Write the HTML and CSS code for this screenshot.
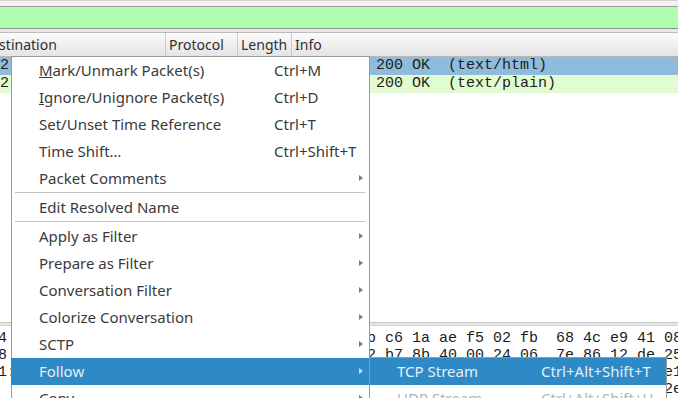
FILE: index.html
```html
<!DOCTYPE html>
<html>
<head>
<meta charset="utf-8">
<link rel="stylesheet" href="styles.css">
</head>
<body>
<div class="app">
  <div class="topstrip"></div>
  <div class="filterbar"></div>
  <div class="gap"></div>
  <div class="plist">
    <div class="scroller">
      <div class="header">
        <div class="hc c-dest">Destination</div>
        <div class="hc c-proto">Protocol</div>
        <div class="hc c-len">Length</div>
        <div class="hc c-info">Info</div>
      </div>
      <div class="row sel">
        <div class="rc c-dest">172.16.0.2</div>
        <div class="rc c-proto">HTTP</div>
        <div class="rc c-len">1242</div>
        <div class="rc c-info">HTTP/1.1 200 OK  (text/html)</div>
      </div>
      <div class="row http">
        <div class="rc c-dest">172.16.0.2</div>
        <div class="rc c-proto">HTTP</div>
        <div class="rc c-len">596</div>
        <div class="rc c-info">HTTP/1.1 200 OK  (text/plain)</div>
      </div>
    </div>
  </div>
  <div class="splitter"></div>
  <div class="bytes">
    <div class="bl">4                              0030  00 1b c6 1a ae f5 02 fb  68 4c e9 41 08 00 45 00</div>
    <div class="bl">8                              0040  05 32 b7 8b 40 00 24 06  7e 86 12 de 25 0a c0 a8</div>
    <div class="bl">1:                             0050  01 6c 00 50 c3 5e 8a 1f  d2 40 77 c0 e1 50 18 01</div>
    <div class="bl">                               0060  f5 9b 00 00 48 54 54 50  2f 31 2e 31 2e 32 30 30</div>
  </div>
</div>

<div class="menu">
  <div class="mi"><span class="lbl"><u>M</u>ark/Unmark Packet(s)</span><span class="sc">Ctrl+M</span></div>
  <div class="mi"><span class="lbl"><u>I</u>gnore/Unignore Packet(s)</span><span class="sc">Ctrl+D</span></div>
  <div class="mi"><span class="lbl">Set/Unset Time Reference</span><span class="sc">Ctrl+T</span></div>
  <div class="mi"><span class="lbl">Time Shift…</span><span class="sc">Ctrl+Shift+T</span></div>
  <div class="mi"><span class="lbl">Packet Comments</span><span class="arr"></span></div>
  <div class="sep"></div>
  <div class="mi"><span class="lbl">Edit Resolved Name</span></div>
  <div class="sep"></div>
  <div class="mi"><span class="lbl">Apply as Filter</span><span class="arr"></span></div>
  <div class="mi"><span class="lbl">Prepare as Filter</span><span class="arr"></span></div>
  <div class="mi"><span class="lbl">Conversation Filter</span><span class="arr"></span></div>
  <div class="mi"><span class="lbl">Colorize Conversation</span><span class="arr"></span></div>
  <div class="mi"><span class="lbl">SCTP</span><span class="arr"></span></div>
  <div class="mi hl"><span class="lbl">Follow</span><span class="arr"></span></div>
  <div class="mi"><span class="lbl">Copy</span><span class="arr"></span></div>
</div>

<div class="submenu">
  <div class="mi hl"><span class="lbl sub">TCP Stream</span><span class="sc">Ctrl+Alt+Shift+T</span></div>
  <div class="mi dis"><span class="lbl sub">UDP Stream</span><span class="sc">Ctrl+Alt+Shift+U</span></div>
  <div class="mi dis"><span class="lbl sub">TLS Stream</span><span class="sc">Ctrl+Alt+Shift+S</span></div>
</div>
</body>
</html>
```

FILE: styles.css
```css
html, body {
  margin: 0;
  padding: 0;
}
body {
  width: 678px;
  height: 398px;
  overflow: hidden;
  position: relative;
  background: #ffffff;
  font-family: "Noto Sans", sans-serif;
  font-size: 14px;
  color: #333333;
}
.app {
  display: flex;
  flex-direction: column;
  height: 398px;
}
.topstrip {
  height: 5px;
  border-top: 1px solid #d2d2d2;
  background: #f2f2f2;
}
.filterbar {
  height: 21px;
  border-top: 1px solid #9c9c9c;
  border-bottom: 1px solid #8e8e8e;
  background: #affbaf;
}
.gap {
  height: 3px;
  background: #e8e8e8;
  border-bottom: 1px solid #bcbcbc;
}
.plist {
  height: 291px;
  overflow: hidden;
  background: #ffffff;
}
.scroller {
  margin-left: -22px;
}
.header {
  display: flex;
  height: 23px;
  border-bottom: 1px solid #b8b8b8;
  background: linear-gradient(#fbfbfb, #e4e4e4);
}
.hc {
  box-sizing: border-box;
  padding-left: 3px;
  line-height: 23px;
  white-space: nowrap;
  overflow: hidden;
  border-right: 1px solid #c9c9c9;
  color: #303030;
}
.c-dest { width: 188px; flex: none; }
.c-proto { width: 72px; flex: none; }
.c-len { width: 54px; flex: none; }
.c-info { flex: 1; border-right: none; }
.row {
  display: flex;
  height: 18px;
  font-family: "Liberation Mono", monospace;
  font-size: 15px;
  line-height: 18px;
  color: #1c1c1c;
}
.row.sel { background: #8fbcdc; }
.row.http { background: #e0fcd0; }
.rc {
  box-sizing: border-box;
  padding-left: 3px;
  white-space: pre;
  overflow: hidden;
}
.row .c-dest { padding-left: 4px; }
.splitter {
  height: 2px;
  border-top: 1px solid #c6c6c6;
  border-bottom: 1px solid #d6d6d6;
  background: #e6e6e6;
}
.bytes {
  padding-top: 4px;
  font-family: "Liberation Mono", monospace;
  font-size: 15px;
  line-height: 17px;
  color: #1c1c1c;
  margin-left: -2px;
}
.bl {
  white-space: pre;
}

.menu, .submenu {
  position: absolute;
  background: #ffffff;
  border: 1px solid #9a9a9a;
  color: #3a3a3a;
  font-size: 15px;
}
.menu {
  left: 11px;
  top: 56px;
  width: 357px;
}
.submenu {
  left: 369px;
  top: 357px;
  width: 296px;
}
.mi {
  box-sizing: border-box;
  display: flex;
  align-items: center;
  height: 27px;
  padding-left: 27px;
  padding-right: 6px;
  padding-bottom: 1px;
  white-space: nowrap;
}
.lbl {
  width: 235px;
  flex: none;
}
.lbl.sub {
  width: 144px;
}
.sc {
  flex: none;
}
.arr {
  margin-left: auto;
  width: 0;
  height: 0;
  border-left: 4px solid #7c7c7c;
  border-top: 3.5px solid transparent;
  border-bottom: 3.5px solid transparent;
}
.mi.hl {
  background: #2e8ac6;
  color: #e4eef7;
}
.mi.hl .arr {
  border-left-color: #c9dcec;
}
.menu .mi.hl {
  margin: 0 -1px;
  padding-left: 28px;
  padding-right: 7px;
}
.mi.dis {
  color: #b4b4b4;
}
.sep {
  height: 1px;
  background: #c4c4c4;
  margin: 0 4px 1px 3px;
}
```
